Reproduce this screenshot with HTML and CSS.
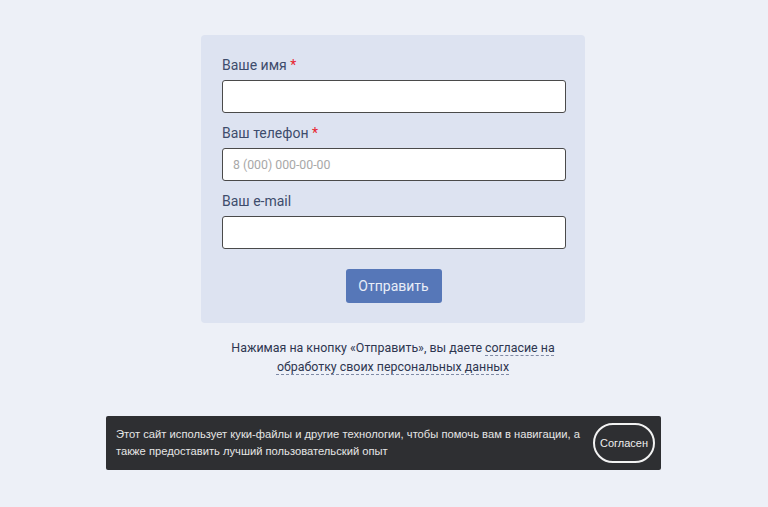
FILE: index.html
```html
<!DOCTYPE html>
<html lang="ru">
<head>
<meta charset="utf-8">
<link rel="stylesheet" href="styles.css">
</head>
<body>
<main class="page">
  <form class="card">
    <div class="field">
      <label class="label">Ваше имя <span class="req">*</span></label>
      <input class="input" type="text">
    </div>
    <div class="field">
      <label class="label">Ваш телефон <span class="req">*</span></label>
      <input class="input" type="text" placeholder="8 (000) 000-00-00">
    </div>
    <div class="field">
      <label class="label">Ваш e-mail</label>
      <input class="input" type="text">
    </div>
    <div class="actions">
      <button class="submit" type="button">Отправить</button>
    </div>
  </form>
  <p class="consent">Нажимая на кнопку «Отправить», вы даете <a class="consent-link" href="#">согласие на обработку своих персональных данных</a></p>
</main>
<div class="cookie">
  <p class="cookie-text">Этот сайт использует куки-файлы и другие технологии, чтобы помочь вам в навигации, а также предоставить лучший пользовательский опыт</p>
  <button class="cookie-btn" type="button">Согласен</button>
</div>
</body>
</html>
```

FILE: styles.css
```css
* { box-sizing: border-box; }
html, body { margin: 0; padding: 0; }
body {
  background: #edf0f7;
  font-family: Roboto, "Liberation Sans", sans-serif;
  width: 768px;
  height: 507px;
  overflow: hidden;
}
.page {
  padding-top: 35px;
  display: flex;
  flex-direction: column;
  align-items: center;
  padding-left: 18px;
}
.card {
  width: 384px;
  background: #dde3f1;
  border-radius: 4px;
  padding: 20px 20px 20px 21px;
  display: flex;
  flex-direction: column;
}
.field {
  display: flex;
  flex-direction: column;
  margin-bottom: 10px;
}
.label {
  font-size: 14px;
  line-height: 20px;
  color: #3e4c6c;
  margin-bottom: 5px;
}
.req { color: #e8232f; }
.input {
  width: 344px;
  height: 33px;
  border: 1.5px solid #4a4a4a;
  border-radius: 3px;
  background: #fff;
  padding: 0 10px;
  font-family: Roboto, sans-serif;
  font-size: 12.3px;
  color: #333;
  outline: none;
}
.input::placeholder { color: #a8a8a8; }
.actions {
  display: flex;
  justify-content: center;
  padding-top: 10px;
}
.submit {
  width: 96px;
  height: 34px;
  background: #5677b8;
  color: #e8edf7;
  border: none;
  border-radius: 3px;
  font-family: Roboto, sans-serif;
  font-size: 14px;
}
.consent {
  width: 380px;
  margin: 15px 0 0;
  text-align: center;
  font-size: 12.4px;
  line-height: 19px;
  color: #2e3650;
}
.consent-link {
  color: #2e3650;
  text-decoration: underline dashed #7f8aa6;
  text-decoration-thickness: 1px;
  text-underline-offset: 3px;
}
.cookie {
  position: absolute;
  left: 106px;
  top: 416px;
  width: 555px;
  height: 54px;
  background: #2e2f32;
  border-radius: 2px;
  display: flex;
  align-items: center;
  padding: 0 6px 0 10px;
  gap: 10px;
}
.cookie-text {
  margin: 0;
  flex: 1;
  font-family: "Liberation Sans", Arial, sans-serif;
  font-size: 11.2px;
  line-height: 17px;
  color: #e6e6e6;
}
.cookie-btn {
  width: 62px;
  height: 40px;
  border: 2px solid #f2f2f2;
  border-radius: 20px;
  background: transparent;
  color: #eee;
  font-family: "Liberation Sans", Arial, sans-serif;
  font-size: 11px;
  padding: 0;
}
```
